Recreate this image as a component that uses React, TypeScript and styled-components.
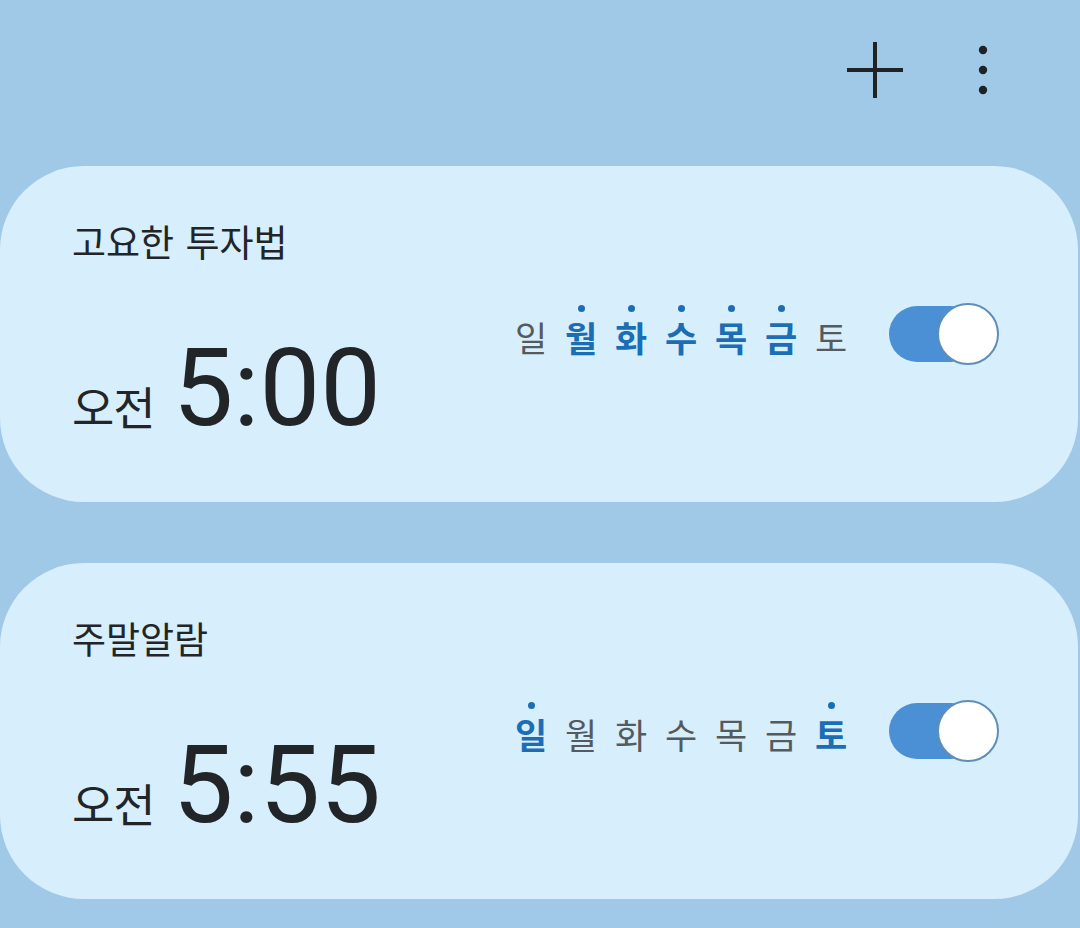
import React from "react";
import styled, { createGlobalStyle } from "styled-components";

const Global = createGlobalStyle`
  html, body { margin: 0; padding: 0; background: #a0c9e7; }
  body { font-family: "Noto Sans CJK KR", "Noto Sans", sans-serif; }
`;

const Page = styled.div`
  width: 1080px;
  height: 928px;
  background: #a0c9e7;
  overflow: hidden;
  display: flex;
  flex-direction: column;
`;

const Toolbar = styled.div`
  height: 166px;
  box-sizing: border-box;
  display: flex;
  justify-content: flex-end;
  align-items: flex-start;
  padding: 42px 69px 0 0;
  gap: 52px;
`;

const IconButton = styled.div`
  width: 56px;
  height: 56px;
  display: flex;
  align-items: center;
  justify-content: center;
  color: #1f2326;
`;

const List = styled.div`
  display: flex;
  flex-direction: column;
  gap: 61px;
  padding-right: 2px;
`;

const Card = styled.div`
  height: 336px;
  box-sizing: border-box;
  background: #d7eefc;
  border-radius: 84px;
  display: grid;
  grid-template-columns: 1fr auto;
  align-items: center;
  padding: 0 79px 0 72px;
`;

const LeftCol = styled.div`
  height: 100%;
  display: flex;
  flex-direction: column;
  justify-content: space-between;
  padding: 50px 0 60px;
  box-sizing: border-box;
`;

const Title = styled.div`
  font-size: 37px;
  line-height: 50px;
  color: #222528;
  word-spacing: 3px;
`;

const TimeRow = styled.div`
  display: flex;
  align-items: baseline;
  gap: 18px;
  color: #222528;
`;

const Meridiem = styled.span`
  font-size: 46px;
  line-height: 1;
  letter-spacing: -1px;
`;

const Clock = styled.span`
  font-family: Roboto, "Open Sans", sans-serif;
  font-size: 108px;
  line-height: 1;
  font-weight: 400;
`;

const RightCol = styled.div`
  display: flex;
  align-items: center;
  gap: 40px;
`;

const Days = styled.div`
  display: flex;
  gap: 14px;
  margin-top: -6px;
`;

const Day = styled.div<{ $on: boolean }>`
  display: flex;
  flex-direction: column;
  align-items: center;
  font-size: 35px;
  line-height: 42px;
  width: 36px;
  font-weight: ${(p) => (p.$on ? 700 : 400)};
  color: ${(p) => (p.$on ? "#1b6db5" : "#555a5e")};
`;

const Dot = styled.span<{ $on: boolean }>`
  width: 7px;
  height: 7px;
  border-radius: 50%;
  background: #1b6db5;
  visibility: ${(p) => (p.$on ? "visible" : "hidden")};
  margin-bottom: 4px;
`;

const Switch = styled.div`
  width: 110px;
  height: 62px;
  display: flex;
  align-items: center;
  justify-content: flex-end;
  position: relative;
`;

const Track = styled.div`
  position: absolute;
  left: 0;
  top: 3px;
  width: 90px;
  height: 56px;
  border-radius: 28px;
  background: #4b8fd5;
`;

const Knob = styled.div`
  position: relative;
  width: 58px;
  height: 58px;
  border-radius: 50%;
  background: #ffffff;
  border: 2px solid #5f8db5;
`;

const DAY_NAMES = ["일", "월", "화", "수", "목", "금", "토"];

type Alarm = { title: string; time: string; on: boolean[] };

const alarms: Alarm[] = [
  { title: "고요한 투자법", time: "5:00", on: [false, true, true, true, true, true, false] },
  { title: "주말알람", time: "5:55", on: [true, false, false, false, false, false, true] },
];

function AlarmCard({ a }: { a: Alarm }) {
  return (
    <Card>
      <LeftCol>
        <Title>{a.title}</Title>
        <TimeRow>
          <Meridiem>오전</Meridiem>
          <Clock>{a.time}</Clock>
        </TimeRow>
      </LeftCol>
      <RightCol>
        <Days>
          {DAY_NAMES.map((d, i) => (
            <Day key={d} $on={a.on[i]}>
              <Dot $on={a.on[i]} />
              {d}
            </Day>
          ))}
        </Days>
        <Switch>
          <Track />
          <Knob />
        </Switch>
      </RightCol>
    </Card>
  );
}

export default function App() {
  return (
    <Page>
      <Global />
      <Toolbar>
        <IconButton>
          <svg width="56" height="56" viewBox="0 0 56 56">
            <path d="M28 0v56M0 28h56" stroke="currentColor" strokeWidth="4" strokeLinecap="round" />
          </svg>
        </IconButton>
        <IconButton>
          <svg width="56" height="56" viewBox="0 0 56 56">
            <circle cx="28" cy="8" r="4.2" fill="currentColor" />
            <circle cx="28" cy="28" r="4.2" fill="currentColor" />
            <circle cx="28" cy="48" r="4.2" fill="currentColor" />
          </svg>
        </IconButton>
      </Toolbar>
      <List>
        {alarms.map((a) => (
          <AlarmCard key={a.title} a={a} />
        ))}
      </List>
    </Page>
  );
}
